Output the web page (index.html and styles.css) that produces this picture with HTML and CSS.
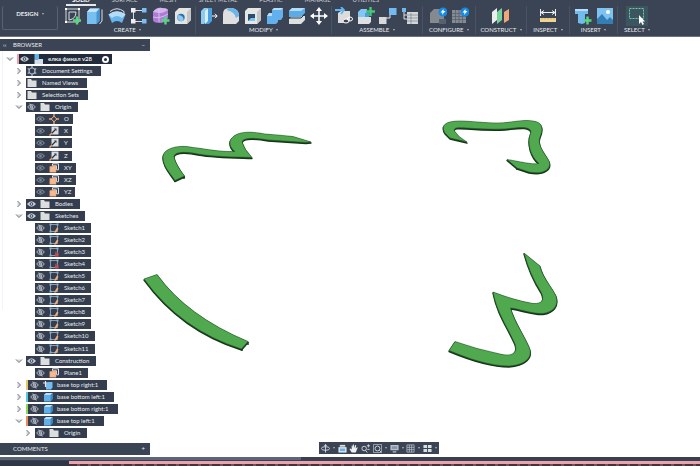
FILE: index.html
```html
<!DOCTYPE html>
<html lang="en">
<head>
<meta charset="utf-8">
<title>Design workspace</title>
<link rel="stylesheet" href="styles.css">
</head>
<body>
<svg class="defs" aria-hidden="true">
  <symbol id="eye" viewBox="0 0 10 8"><path d="M0 4Q5-2 10 4Q5 10 0 4z" fill="currentColor"/><circle cx="5" cy="4" r="2" fill="#343e4f"/><circle cx="5" cy="4" r="1" fill="currentColor"/></symbol>
  <symbol id="hid" viewBox="0 0 10 8"><path d="M.7 4Q5-1.500 9.300 4Q5 9.500.7 4z" fill="none" stroke="currentColor"/><circle cx="5" cy="4" r="1.500" fill="none" stroke="currentColor"/><path d="M3 0l4 8" stroke="currentColor" stroke-width=".8"/></symbol>
  <symbol id="dimeye" viewBox="0 0 10 8"><path d="M.7 4Q5-1 9.300 4Q5 9 .7 4z" fill="none" stroke="currentColor" stroke-width="1.200"/><circle cx="5" cy="4" r="1.500" fill="currentColor"/></symbol>
  <symbol id="folder" viewBox="0 0 10 10"><path d="M.5 1h3.500l1 1.500h4.500V9h-9z" fill="#dcdddd"/></symbol>
  <symbol id="gear" viewBox="0 0 10 10"><circle cx="5" cy="5" r="3" fill="none" stroke="#a9bac9" stroke-width="1.200"/><path d="M5 0v2M5 8v2M.7 2.500l1.700 1M7.600 6.500l1.700 1M.7 7.500l1.700-1M7.600 3.500l1.700-1" stroke="#a9bac9" stroke-width="1.300"/></symbol>
  <symbol id="point" viewBox="0 0 10 10"><path d="M5 0v10M0 5h10" stroke="#e9a36d" stroke-width="1.400"/><path d="M5 2.200L7.800 5 5 7.800 2.200 5z" fill="#343e4f" stroke="#f0b78a"/></symbol>
  <symbol id="axis" viewBox="0 0 10 10"><path d="M2.500.500h7v8h-7z" fill="#d9dbdc"/><path d="M2 8l4.500-4.500" stroke="#2b3442" stroke-width="1.200"/><path d="M.5 9.500L3 7" stroke="#e9a36d" stroke-width="1.500"/><path d="M5 2.500h2.500V5z" fill="#2b3442"/></symbol>
  <symbol id="plane" viewBox="0 0 10 10"><path d="M3.500.8h6v6h-2v-4h-4z" fill="#343e4f" stroke="#dde0e2"/><path d="M.8 3.500L7 2.800v6.400H.8z" fill="#f5b994" stroke="#e09a68" stroke-width=".5"/></symbol>
  <symbol id="sketch" viewBox="0 0 10 10"><path d="M1.500 1.500h7v7h-7z" fill="none" stroke="#a3b3c1" stroke-width=".8"/><path d="M.5.500h2v2h-2zM7.500.500h2v2h-2zM.5 7.500h2v2h-2z" fill="#7fb0d7"/><path d="M5 9.500l3-5 1.500 1L7 9.500z" fill="#f0ad78"/></symbol>
  <symbol id="locked" viewBox="0 0 10 10"><path d="M1.500 1.500h7v7h-7z" fill="none" stroke="#a3b3c1" stroke-width=".8"/><path d="M.5.500h2v2h-2zM7.500.500h2v2h-2zM.5 7.500h2v2h-2z" fill="#7fb0d7"/><path d="M6 6.500h3.500v3H6z" fill="#c4505e"/><path d="M6.700 6.500V5h2v1.500" fill="none" stroke="#c4505e" stroke-width=".8"/></symbol>
  <symbol id="body" viewBox="0 0 10 10"><path d="M1 3l2-2h6.500v6l-2 2.500H1z" fill="#61b0e8"/><path d="M1 3l2-2h6.500L7.500 3z" fill="#b9e0fa"/><path d="M7.500 3l2-2v6l-2 2.500z" fill="#388ac7"/></symbol>
  <symbol id="bodylink" viewBox="0 0 10 10"><path d="M3 3.500L4.500 2h5v5.500L8 9.500H3z" fill="#74bcef"/><path d="M0 3h4M2.500 1v6" stroke="#e6e9ec" stroke-width="1.200"/></symbol>
  <symbol id="assembly" viewBox="0 0 10 10"><path d="M1.500 0H6v5.500H1.500z" fill="#62b3ec"/><path d="M1.500 5.500h4V10h-4zM5.500 5h4.500v5H5.500z" fill="#d3dfe8"/></symbol>
  <symbol id="open" viewBox="0 0 8 8"><path d="M1 2.500l3 3 3-3z" fill="#d4d6d8"/><path d="M1 2.500l3 3 3-3" fill="none" stroke="#777a7e"/></symbol>
  <symbol id="shut" viewBox="0 0 8 8"><path d="M2.500 1l3 3-3 3z" fill="#d4d6d8"/><path d="M2.500 1l3 3-3 3" fill="none" stroke="#777a7e"/></symbol>
</svg>

<header class="ribbon">
  <nav class="tabs">
    <a class="on" href="#solid">SOLID</a><a href="#surface">SURFACE</a><a href="#mesh">MESH</a><a href="#sheet">SHEET METAL</a><a href="#plastic">PLASTIC</a><a href="#manage">MANAGE</a><a href="#utilities">UTILITIES</a>
  </nav>
  <div class="tools">
    <button class="mode">DESIGN <i class="caret"></i></button>
    <section class="group create">
      <div class="icons">
        <button aria-label="Create sketch"><svg viewBox="0 0 18 18"><path d="M2 2h13v13H2z" fill="none" stroke="#d9dde1"/><path d="M5 13V5h7q0 7-7 8" fill="none" stroke="#d9dde1"/><path d="M1 1h2v2H1zM14 1h2v2h-2zM1 14h2v2H1z" fill="#fff"/><path d="M13 9.500v8M9 13.500h8" stroke="#5bd486" stroke-width="2.400"/></svg></button>
        <button aria-label="Extrude"><svg viewBox="0 0 18 18"><path d="M1 5l3-3.500h9.500V14l-3 3H1z" fill="#78bff0"/><path d="M1 5l3-3.500h9.500l-3 3.500z" fill="#c2e4fb"/><path d="M10.500 5l3-3.500V14l-3 3z" fill="#4297d8"/><path d="M16 2.500V14l-2.500 3" fill="none" stroke="#dfe3e7"/></svg></button>
        <button aria-label="Revolve"><svg viewBox="0 0 18 18"><path d="M.5 7.500Q9 1 17.500 7.500L14 16q-5-4-10 0z" fill="#68b5eb"/><path d="M.5 7.500Q9 1 17.500 7.500L14 11q-5-4-10 0z" fill="#b5dcf7"/><path d="M2 4.500Q9-1 16 4.500V8" fill="none" stroke="#e0e4e7"/></svg></button>
        <button aria-label="Pattern"><svg viewBox="0 0 18 18"><path d="M14 3.500H3.500v11H14" fill="none" stroke="#d7dce0"/><path d="M1 1h4.500v4.500H1zM1 12h4.500v4.500H1z" fill="#edf0f1"/><path d="M12 1h4.500v4.500H12zM12 12h4.500v4.500H12z" fill="#79bff1"/></svg></button>
        <button aria-label="Create form"><svg viewBox="0 0 18 18"><path d="M1 5q4-5 9-4 5 0 6 2v8q-3 5-8 5-7 0-7-3z" fill="#ad7dd6"/><path d="M1 5q4-5 9-4 5 0 6 2-5 3-7 3T1 5z" fill="#d5b3ed"/><path d="M1 10q7 2 15-3M7 2v13" fill="none" stroke="#e4c9f5" stroke-width=".8"/><path d="M13.500 9.500v8M9.500 13.500h8" stroke="#5bd486" stroke-width="2.400"/></svg></button>
        <button aria-label="Hole"><svg viewBox="0 0 18 18"><path d="M1 5l4-4h12v12l-4 4H1z" fill="#e4e4e2"/><path d="M13 5l4-4v12l-4 4z" fill="#c3c5c5"/><circle cx="7" cy="10.500" r="3.700" fill="#2c70ac"/><path d="M4.400 8a3.700 3.700 0 0 0 5.200 5.200q.5-4.500-5.200-5.200" fill="#8ccaf4"/></svg></button>
      </div>
      <button class="label">CREATE <i class="caret"></i></button>
    </section>
    <section class="group modify">
      <div class="icons">
        <button aria-label="Press pull"><svg viewBox="0 0 18 18"><path d="M1 4l3-3h3v13l-3 3H1z" fill="#8bcbf4"/><path d="M5 4l3-3h4v13l-3 3H5z" fill="#4ba2df"/><path d="M5 4l3-3v13l-3 3z" fill="#d8eefb"/><path d="M12 9h5M15 6.800L17.200 9 15 11.200" fill="none" stroke="#fff"/></svg></button>
        <button aria-label="Fillet"><svg viewBox="0 0 18 18"><path d="M1 7q0-6 6-6h3q7 1 7 8v5l-3 3H1z" fill="#dedfde"/><path d="M7 1h3q7 1 7 8l-3 2Q13 5 4.500 3z" fill="#69b6ed"/></svg></button>
        <button aria-label="Shell"><svg viewBox="0 0 18 18"><path d="M1 4l3-3h13v12l-4 4H1z" fill="#e6e6e4"/><path d="M4 7h7v7H4z" fill="#284f70"/><path d="M4 14l3-3h4v3z" fill="#7ec3f2"/><path d="M13 5l4-4v12l-4 4z" fill="#c3c6c6"/></svg></button>
        <button aria-label="Combine"><svg viewBox="0 0 18 18"><path d="M6 3l2-2h9v9l-2 3h-3v2l-2 2H1V9l2-3h3z" fill="#62b1ec"/><path d="M6 3l2-2h9l-2 2zM1 9l2-3h3v3z" fill="#b7dffa"/></svg></button>
        <button aria-label="Split body"><svg viewBox="0 0 18 18"><path d="M1 12l3-3h13v4l-4 4H1z" fill="#dedfdf"/><path d="M1 4l3-3h13v5l-4 4H1z" fill="#5babe4"/><path d="M1 4l3-3h13l-4 3z" fill="#afddfa"/><path d="M0 11h13l4-4" fill="none" stroke="#263344"/></svg></button>
        <button aria-label="Move"><svg viewBox="0 0 18 18"><path d="M9 2v14M2 9h14" stroke="#fff" stroke-width="1.500"/><path d="M9 0l3 4H6zM9 18l3-4H6zM0 9l4-3v6zM18 9l-4-3v6z" fill="#fff"/></svg></button>
      </div>
      <button class="label">MODIFY <i class="caret"></i></button>
    </section>
    <section class="group assemble">
      <div class="icons">
        <button aria-label="Insert component"><svg viewBox="0 0 18 18"><path d="M3 6l3-2h9v9l-3 3H3z" fill="#dcdddb"/><path d="M0 3h8M6 0l3 3-3 4" fill="none" stroke="#60b7f4" stroke-width="1.800"/><ellipse cx="11" cy="14" rx="3" ry="2" fill="#3b4454" stroke="#fff"/><ellipse cx="15" cy="12" rx="2.500" ry="2" fill="none" stroke="#fff"/></svg></button>
        <button aria-label="New component"><svg viewBox="0 0 18 18"><path d="M1 5l3-3h6v8H1z" fill="#83c6f3"/><path d="M1 10h7v7H1zM8 10h6v5l-2 2H8z" fill="#dce0e0"/><path d="M8 6h4v4H8z" fill="#4c9ed9"/><path d="M13.500 0v9M9 4.500h9" stroke="#45c875" stroke-width="2.400"/></svg></button>
        <button aria-label="Joint"><svg viewBox="0 0 18 18"><path d="M11 7v4H7" fill="none" stroke="#e5e8ea"/><path d="M0 10h7.500v7H0z" fill="#d8dad9"/><path d="M10 1h7.500v7H10z" fill="#74baf0"/></svg></button>
        <button aria-label="Bill of materials"><svg viewBox="0 0 18 18"><path d="M1 1h4v4H1z" fill="#70b8ed"/><path d="M3 5v7h4M3 8h4" fill="none" stroke="#dce0e2"/><path d="M6 5h11v12H6z" fill="#d3d6d7"/><path d="M6 8h11M6 11h11M6 14h11M10 6v11" stroke="#6d7680" stroke-width=".6"/></svg></button>
      </div>
      <button class="label">ASSEMBLE <i class="caret"></i></button>
    </section>
    <section class="group configure">
      <div class="icons">
        <button aria-label="Configure model"><svg viewBox="0 0 18 18"><path d="M1 6l4-4h10v10l-3 4H1z" fill="#858a90"/><path d="M10 12h7v5h-7z" fill="#566170"/><circle cx="14" cy="5" r="4.500" fill="#168ae2"/><path d="M14.500 2l-3 3.500h2L13 8l3.500-4h-2z" fill="#fff"/></svg></button>
        <button aria-label="Configuration table"><svg viewBox="0 0 18 18"><path d="M1 3h14v13H1z" fill="#858b92"/><path d="M1 6.500h14M1 9.500h14M1 12.500h14M4.500 3v13M8 3v13M11.500 3v13" stroke="#4d5866" stroke-width=".6"/><circle cx="14" cy="5" r="4.500" fill="#168ae2"/><path d="M14.500 2l-3 3.500h2L13 8l3.500-4h-2z" fill="#fff"/></svg></button>
      </div>
      <button class="label">CONFIGURE <i class="caret"></i></button>
    </section>
    <section class="group construct">
      <div class="icons"><button aria-label="Offset plane"><svg viewBox="0 0 18 18"><path d="M0 5l5-4v12l-5 4z" fill="#eceeed"/><path d="M5 5l5-4v12l-5 4z" fill="#75d49a"/><path d="M12 5l5-3v11l-5 3z" fill="#efa678"/></svg></button></div>
      <button class="label">CONSTRUCT <i class="caret"></i></button>
    </section>
    <section class="group inspect">
      <div class="icons"><button aria-label="Measure"><svg viewBox="0 0 18 18"><path d="M1.500 2v7M16.500 2v7M2 5.500h14M5 3.500l-3 2 3 2M13 3.500l3 2-3 2" fill="none" stroke="#edf0f1"/><path d="M1 11h16v4H1z" fill="#f0d590"/><path d="M3 11v1.500M6 11v1.500M9 11v1.500M12 11v1.500M15 11v1.500" stroke="#ae945c" stroke-width=".6"/></svg></button></div>
      <button class="label">INSPECT <i class="caret"></i></button>
    </section>
    <section class="group insert">
      <div class="icons">
        <button aria-label="Insert part"><svg viewBox="0 0 18 18"><path d="M1 2h13v5h-3v9l-3 1-4-1V7H1z" fill="#72bbef"/><path d="M1 2h13v2H1z" fill="#b7def8"/><path d="M13.500 9.500v8M9.500 13.500h8" stroke="#5bd486" stroke-width="2.400"/></svg></button>
        <button aria-label="Insert image"><svg viewBox="0 0 18 18"><path d="M1 1h16v16H1z" fill="#7ec2ef"/><path d="M1 12l5-5 5 6 3-3 3 3v4H1z" fill="#347eb6"/><circle cx="12" cy="5" r="2" fill="#fff"/></svg></button>
      </div>
      <button class="label">INSERT <i class="caret"></i></button>
    </section>
    <section class="group select">
      <div class="icons"><button class="active" aria-label="Select"><svg viewBox="0 0 18 18"><path d="M1.500 1.500h14v10h-14z" fill="none" stroke="#70cba0" stroke-dasharray="2 1"/><path d="M11 8v9l2-2 1.500 3 1.500-1-1.500-2.500H17z" fill="#fff"/></svg></button></div>
      <button class="label">SELECT <i class="caret"></i></button>
    </section>
  </div>
</header>

<main class="workspace">
  <svg class="canvas" viewBox="0 37 700 420" role="img" aria-label="Model bodies">
    <defs>
      <path id="b1" d="M311 142L293 136.500Q279 135 265 134C252 131.500 235 130 230 141Q229 147 235 151.500C219 152 207 149 193 147.500C177 144 162 149 163 158C163 166 170 173 175 180.500L184.500 176C179 169 174 160 174 156C176 151 189 152 198 154C215 157 237 157 252 157.500Q244 149 242 142C243 137 258 138 268 140L306 142.500z"/>
      <path id="b2" d="M467 142Q458 137 454.500 131C453 127 459 127.500 467 128C480 129 492 129.500 505 129C516 128 530 125 531 132C526 143 531 157 539 163.500C532 165 518 161 507 159.500L517 168L529 172C545 175 552 168 549 161C544 152 537 145 540 137C544 128 542 122 533 121C523 119 510 123 498 123C485 123 470 121 460 121C446 121 440 125 445 133L450 138z"/>
      <path id="b3" d="M144 279L157 274.500Q187 316 248 341.500L241.500 349Q181 330 144 279z"/>
      <path id="b4" d="M524 253L540 266C542 277 552 287 556 296C559 305 554 312 543 313.500C532 314 520 309 510.500 308C514 321 524 335 529 347C534 358 524 365 509 366C489 366 467 358 449 350.500L455 341.500Q476 349 500 354C512 357 518 353 515 344C507 326 497 313 493 292C506 297 519 301 533 303.500C542 304 545 300 541 292Q530 275 524 253z"/>
    </defs>
    <g class="side"><use href="#b1" y="1"/><use href="#b2" y="1"/><use href="#b3" y="1"/><use href="#b4" y="1"/><path d="M175 181v1M184 177v2M242 349v2M248 342v3M450 138v1M460 141v1M517 169v1"/></g>
    <g class="top"><use href="#b1"/><use href="#b2"/><use href="#b3"/><use href="#b4"/></g>
  </svg>

  <aside class="panel">
    <h2 class="bar"><span class="fold">‹‹</span>BROWSER<button aria-label="Collapse browser">–</button></h2>
    <ul class="tree">
      <li class="root"><svg class="tw"><use href="#open"/></svg><div class="item red"><svg class="eye"><use href="#eye"/></svg><svg class="ic"><use href="#assembly"/></svg><span>елка финал v28</span><input type="radio" aria-label="Activate component" checked></div></li>
      <li><svg class="tw"><use href="#shut"/></svg><div class="item near"><svg class="ic"><use href="#gear"/></svg><span>Document Settings</span></div></li>
      <li><svg class="tw"><use href="#shut"/></svg><div class="item near"><svg class="ic"><use href="#folder"/></svg><span>Named Views</span></div></li>
      <li><svg class="tw"><use href="#shut"/></svg><div class="item near"><svg class="ic"><use href="#folder"/></svg><span>Selection Sets</span></div></li>
      <li><svg class="tw"><use href="#open"/></svg><div class="item"><svg class="eye"><use href="#hid"/></svg><svg class="ic"><use href="#folder"/></svg><span>Origin</span></div></li>
      <li class="leaf"><div class="item dim"><svg class="eye"><use href="#dimeye"/></svg><svg class="ic"><use href="#point"/></svg><span>O</span></div></li>
      <li class="leaf"><div class="item dim"><svg class="eye"><use href="#dimeye"/></svg><svg class="ic"><use href="#axis"/></svg><span>X</span></div></li>
      <li class="leaf"><div class="item dim"><svg class="eye"><use href="#dimeye"/></svg><svg class="ic"><use href="#axis"/></svg><span>Y</span></div></li>
      <li class="leaf"><div class="item dim"><svg class="eye"><use href="#dimeye"/></svg><svg class="ic"><use href="#axis"/></svg><span>Z</span></div></li>
      <li class="leaf"><div class="item dim"><svg class="eye"><use href="#dimeye"/></svg><svg class="ic"><use href="#plane"/></svg><span>XY</span></div></li>
      <li class="leaf"><div class="item dim"><svg class="eye"><use href="#dimeye"/></svg><svg class="ic"><use href="#plane"/></svg><span>XZ</span></div></li>
      <li class="leaf"><div class="item dim"><svg class="eye"><use href="#dimeye"/></svg><svg class="ic"><use href="#plane"/></svg><span>YZ</span></div></li>
      <li><svg class="tw"><use href="#shut"/></svg><div class="item"><svg class="eye"><use href="#eye"/></svg><svg class="ic"><use href="#folder"/></svg><span>Bodies</span></div></li>
      <li><svg class="tw"><use href="#open"/></svg><div class="item"><svg class="eye"><use href="#eye"/></svg><svg class="ic"><use href="#folder"/></svg><span>Sketches</span></div></li>
      <li class="leaf"><div class="item"><svg class="eye"><use href="#hid"/></svg><svg class="ic"><use href="#sketch"/></svg><span>Sketch1</span></div></li>
      <li class="leaf"><div class="item"><svg class="eye"><use href="#hid"/></svg><svg class="ic"><use href="#sketch"/></svg><span>Sketch2</span></div></li>
      <li class="leaf"><div class="item"><svg class="eye"><use href="#hid"/></svg><svg class="ic"><use href="#locked"/></svg><span>Sketch3</span></div></li>
      <li class="leaf"><div class="item"><svg class="eye"><use href="#hid"/></svg><svg class="ic"><use href="#locked"/></svg><span>Sketch4</span></div></li>
      <li class="leaf"><div class="item"><svg class="eye"><use href="#hid"/></svg><svg class="ic"><use href="#sketch"/></svg><span>Sketch5</span></div></li>
      <li class="leaf"><div class="item"><svg class="eye"><use href="#hid"/></svg><svg class="ic"><use href="#sketch"/></svg><span>Sketch6</span></div></li>
      <li class="leaf"><div class="item"><svg class="eye"><use href="#hid"/></svg><svg class="ic"><use href="#sketch"/></svg><span>Sketch7</span></div></li>
      <li class="leaf"><div class="item"><svg class="eye"><use href="#hid"/></svg><svg class="ic"><use href="#sketch"/></svg><span>Sketch8</span></div></li>
      <li class="leaf"><div class="item"><svg class="eye"><use href="#hid"/></svg><svg class="ic"><use href="#sketch"/></svg><span>Sketch9</span></div></li>
      <li class="leaf"><div class="item"><svg class="eye"><use href="#hid"/></svg><svg class="ic"><use href="#sketch"/></svg><span>Sketch10</span></div></li>
      <li class="leaf"><div class="item"><svg class="eye"><use href="#hid"/></svg><svg class="ic"><use href="#sketch"/></svg><span>Sketch11</span></div></li>
      <li><svg class="tw"><use href="#open"/></svg><div class="item"><svg class="eye"><use href="#eye"/></svg><svg class="ic"><use href="#folder"/></svg><span>Construction</span></div></li>
      <li class="leaf"><div class="item"><svg class="eye"><use href="#hid"/></svg><svg class="ic"><use href="#plane"/></svg><span>Plane1</span></div></li>
      <li><svg class="tw"><use href="#shut"/></svg><div class="item part yellow"><svg class="eye"><use href="#hid"/></svg><svg class="ic"><use href="#bodylink"/></svg><span>base top right:1</span></div></li>
      <li><svg class="tw"><use href="#shut"/></svg><div class="item part cyan"><svg class="eye"><use href="#hid"/></svg><svg class="ic"><use href="#body"/></svg><span>base bottom left:1</span></div></li>
      <li><svg class="tw"><use href="#shut"/></svg><div class="item part green"><svg class="eye"><use href="#hid"/></svg><svg class="ic"><use href="#body"/></svg><span>base bottom right:1</span></div></li>
      <li><svg class="tw"><use href="#open"/></svg><div class="item part orange"><svg class="eye"><use href="#hid"/></svg><svg class="ic"><use href="#body"/></svg><span>base top left:1</span></div></li>
      <li class="sub"><svg class="tw"><use href="#shut"/></svg><div class="item"><svg class="eye"><use href="#hid"/></svg><svg class="ic"><use href="#folder"/></svg><span>Origin</span></div></li>
    </ul>
    <h2 class="bar">COMMENTS<button aria-label="Add comment">+</button></h2>
  </aside>

  <nav class="viewbar">
    <button aria-label="Orbit"><svg viewBox="0 0 10 10"><ellipse cx="5" cy="5" rx="4.500" ry="2" fill="none" stroke="#d5dae0"/><path d="M5 .5v9M3.500 2L5 .5 6.500 2" fill="none" stroke="#d5dae0"/></svg></button><i class="caret"></i>
    <button aria-label="Look at"><svg viewBox="0 0 10 10"><path d="M.5 3.500h9v6h-9z" fill="#e8ecef"/><path d="M2 1h6v2H2z" fill="#dce1e5"/><path d="M2 5h6v3H2z" fill="#65b3ea"/></svg></button>
    <button aria-label="Pan"><svg viewBox="0 0 10 10"><path d="M3 9.500L.5 5.500l1-.5L3 6V2l1-.5.5 3V.500h1l.3 4L7 1l1 .3L7.500 5 9 3.500l.7.500L7.500 9.500z" fill="#eef0f2"/></svg></button>
    <button aria-label="Zoom"><svg viewBox="0 0 10 10"><circle cx="3.500" cy="5" r="2.500" fill="none" stroke="#d5dae0"/><path d="M5 7l2 2.500M6.500 2H10M8.200.300v3.500M7 6h2.500" stroke="#d5dae0"/></svg></button>
    <button aria-label="Fit"><svg viewBox="0 0 10 10"><path d="M.5.500h9v9h-9z" fill="none" stroke="#a4adb9"/><circle cx="5" cy="5" r="2.700" fill="none" stroke="#d5dae0"/><path d="M7 7l2 2" stroke="#d5dae0"/></svg></button><i class="caret"></i>
    <button aria-label="Display settings"><svg viewBox="0 0 10 10"><path d="M.5 1h9v6h-9zM3 8h4v1.500H3z" fill="#b8c2cd"/><path d="M2 2.500h6v3H2z" fill="#8796a7"/></svg></button><i class="caret"></i>
    <button aria-label="Grid settings"><svg viewBox="0 0 10 10"><path d="M1 1h8v8H1zM1 3.700h8M1 6.300h8M3.700 1v8M6.300 1v8" fill="none" stroke="#bec6ce" stroke-width=".8"/></svg></button><i class="caret"></i>
    <button aria-label="Viewports"><svg viewBox="0 0 10 10"><path d="M.5 1h4v3.500h-4zM5.500 1h4v3.500h-4zM.5 5.500h4V9h-4zM5.500 5.500h4V9h-4z" fill="#d9dee3"/></svg></button><i class="caret"></i>
  </nav>
</main>

<footer class="timeline"><div class="scroll"><div class="thumb"></div></div><div class="track"><div class="clips"></div></div></footer>
</body>
</html>
```
FILE: styles.css
```css
* { box-sizing: border-box; }
body {
  margin: 0;
  height: 100vh;
  display: flex;
  flex-direction: column;
  overflow: hidden;
  background: #fff;
  color: #e8ebee;
  font: 6px/8px Lato, "Noto Sans", sans-serif;
}
button {
  margin: 0;
  padding: 0;
  border: 0;
  background: none;
  color: inherit;
  font: inherit;
}
svg { display: block; }
.defs { position: absolute; width: 0; height: 0; }

.ribbon {
  height: 37px;
  flex: none;
  display: flex;
  flex-direction: column;
  background: #3b4454;
  border-bottom: 1px solid #6b7280;
  overflow: hidden;
}
.tabs {
  height: 6px;
  display: flex;
  align-items: flex-end;
  gap: 22px;
  padding-left: 72px;
}
.tabs a {
  height: 10px;
  flex: none;
  color: #ccd1d7;
  text-decoration: none;
  white-space: nowrap;
}
.tabs .on { color: #fff; font-weight: bold; position: relative; }
.tabs .on::after {
  content: "";
  position: absolute;
  inset: auto -6px 0;
  height: 2px;
  background: #e5e8eb;
}
.tools { flex: 1; display: flex; align-items: flex-start; }
.mode {
  width: 56px;
  height: 24px;
  margin: 0 2px;
  border: 1px solid #596273;
  border-top: 0;
  border-radius: 2px;
  font-weight: bold;
  padding-bottom: 8px;
}
.caret {
  display: inline-block;
  border: 1px solid transparent;
  border-top: 2px solid #aeb5be;
  border-bottom: 0;
  margin-left: 2px;
  vertical-align: 1px;
}
.group {
  height: 28px;
  display: flex;
  flex-direction: column;
  align-items: center;
  border-right: 1px solid #4a5363;
}
.create, .modify { width: 136px; }
.assemble { width: 91px; }
.configure { width: 53px; }
.construct { width: 51px; }
.inspect { width: 43px; }
.insert { width: 48px; }
.select { width: 38px; border: 0; }
.icons { display: flex; height: 20px; }
.icons button { width: 22px; height: 20px; display: grid; place-items: center; }
.icons svg { width: 18px; height: 18px; }
.icons .active { background: #3c5661; }
.label { white-space: nowrap; height: 8px; }

.workspace { flex: 1; min-height: 0; position: relative; display: flex; }
.canvas { position: absolute; inset: 0; width: 100%; height: 100%; }
.side { fill: #17351a; stroke: #17351a; stroke-width: 1.4; stroke-linejoin: round; }
.top { fill: #50a94e; stroke: #24592a; stroke-width: .6; stroke-linejoin: round; }

.panel {
  position: relative;
  width: 150px;
  padding: 2px 0;
  display: flex;
  flex-direction: column;
}
.bar {
  height: 12px;
  flex: none;
  margin: 0;
  padding: 0 5px 0 13px;
  display: flex;
  align-items: center;
  background: #3b4454;
  font: inherit;
}
.bar button { margin-left: auto; }
.fold { width: 10px; margin-left: -10px; }
.tree {
  flex: 1;
  min-height: 0;
  margin: 0;
  padding: 2px 0 4px;
  list-style: none;
  display: flex;
  flex-direction: column;
  background: linear-gradient(#eef4f8, #eef4f8) 2px 0 / 1px 66% no-repeat;
}
.tree li { flex: 1; display: flex; align-items: center; padding-left: 15px; }
.tree .root { padding-left: 6px; font-weight: bold; }
.tree .leaf { padding-left: 35px; }
.tree .sub { padding-left: 24px; }
.tw { width: 8px; height: 8px; margin-right: 3px; }
.item {
  height: 10px;
  display: flex;
  align-items: center;
  padding: 0 7px 0 1px;
  background: #343e4f;
  white-space: nowrap;
}
.leaf .item { padding-right: 6px; }
.leaf .dim { padding-right: 4px; }
.near, .part { padding-right: 9px; }
.eye { width: 9px; height: 8px; margin-right: 4px; color: #c6cdd5; }
.dim .eye { color: #7d8895; }
.item .ic { width: 10px; height: 10px; margin-right: 5px; }
.part, .red { border-left: 2px solid; }
.part .eye { margin-left: 1px; }
.part .ic { margin-right: 4px; }
.yellow { border-color: #e8c46c; }
.cyan { border-color: #55cbe0; }
.green { border-color: #8fd755; }
.orange { border-color: #ef8a5b; }
.red { border-color: #f0a0a8; background: #222b3a; padding-right: 3px; }
.red input {
  appearance: none;
  width: 7px;
  height: 7px;
  margin: 0 0 0 10px;
  border: 2px solid #fff;
  border-radius: 50%;
}

.viewbar {
  position: absolute;
  left: 50%;
  bottom: 3px;
  width: 120px;
  height: 12px;
  margin-left: -31px;
  padding: 0 2px;
  display: flex;
  align-items: center;
  justify-content: space-between;
  background: #3b4454;
}
.viewbar svg { width: 9px; height: 9px; }
.viewbar .caret { margin: 0; }

.timeline { flex: none; height: 9px; background: #2f3746; }
.scroll { height: 4px; background: #3b4050; }
.thumb { width: 43%; height: 3px; background: #5d6578; }
.track { padding-left: 69px; }
.clips {
  height: 5px;
  border-top: 3px solid #e9a5ae;
  background: repeating-linear-gradient(90deg, #4a3039 0 8px, #75525b 8px 11px);
}
```
